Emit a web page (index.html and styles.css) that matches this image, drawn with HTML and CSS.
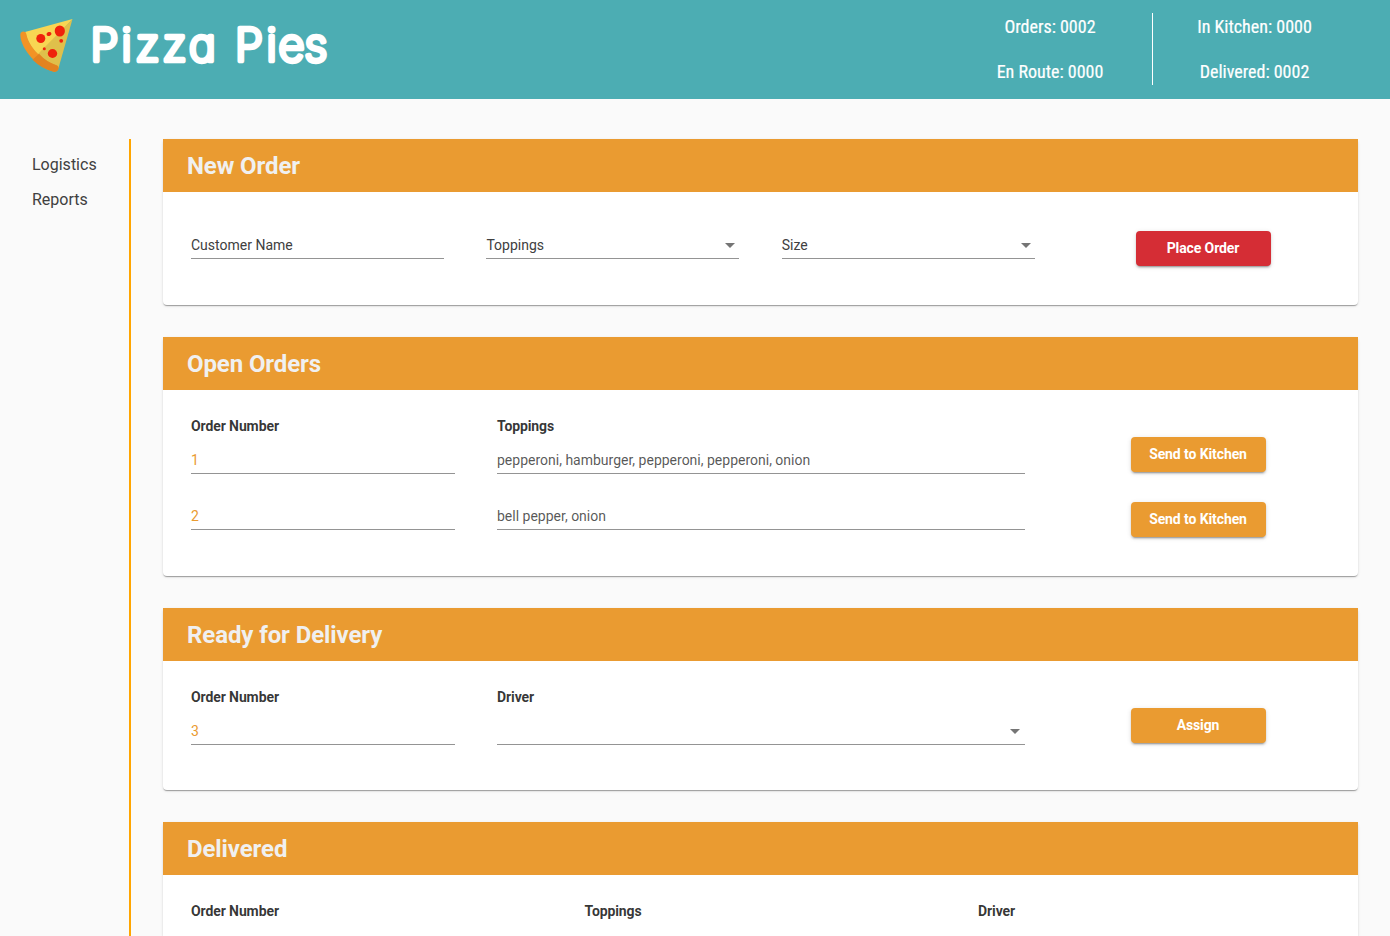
FILE: index.html
```html
<!DOCTYPE html>
<html lang="en">
<head>
<meta charset="utf-8">
<title>Pizza Pies</title>
<link rel="stylesheet" href="styles.css">
</head>
<body>
<header class="topbar">
  <svg class="logo" width="340" height="99" viewBox="0 0 340 99" role="img" aria-label="Pizza Pies">
    <path d="M25 32 72.5 19 39 56Q28 45 25 32Z" fill="#f8d653"/>
    <path d="M72.5 19 58.5 68Q46 63 38 54Z" fill="#dfc04b"/>
    <path d="M20.3 35Q20.2 31.8 23.5 31.5Q26 31.4 26.4 34C28.5 47 43 61.5 56.5 65.2Q59.5 66.5 58 70Q56.5 72.4 53 71.5C38 67.5 21 50 20.3 35Z" fill="#f29325"/>
    <path d="M39 53.8Q46.5 62.3 56.5 65.2Q59.5 66.5 58 70Q56.5 72.4 53 71.5Q41 68.3 32.5 59.8Z" fill="#e28320"/>
    <g fill="#ef220b">
      <circle cx="40.8" cy="38.5" r="4.5"/>
      <ellipse cx="49" cy="34" rx="2.5" ry="2" transform="rotate(-15 49 34)"/>
      <ellipse cx="59.8" cy="31" rx="5.1" ry="5.6"/>
      <circle cx="61.2" cy="40.8" r="1.9"/>
      <circle cx="44.3" cy="48.7" r="1.5"/>
      <ellipse cx="52.5" cy="53.5" rx="4.7" ry="4.4"/>
    </g>
    <text class="wordmark" y="61" x="90.5 121.5 135.5 162.5 189 217 235 266.5 278.5 304.5">Pizza Pies</text>
  </svg>
  <div class="stats">
    <div class="stat-col"><span>Orders: 0002</span><span>En Route: 0000</span></div>
    <div class="stat-col"><span>In Kitchen: 0000</span><span>Delivered: 0002</span></div>
  </div>
</header>
<div class="layout">
  <nav class="sidebar"><a>Logistics</a><a>Reports</a></nav>
  <main class="content">
    <section class="card new-order">
      <h2>New Order</h2>
      <div class="form">
        <div class="field">Customer Name</div>
        <div class="field select">Toppings</div>
        <div class="field select">Size</div>
        <button class="btn red">Place Order</button>
      </div>
    </section>
    <section class="card open-orders">
      <h2>Open Orders</h2>
      <div class="table">
        <div class="col"><strong>Order Number</strong><div class="field num">1</div><div class="field num">2</div></div>
        <div class="col"><strong>Toppings</strong><div class="field value">pepperoni, hamburger, pepperoni, pepperoni, onion</div><div class="field value">bell pepper, onion</div></div>
        <div class="actions"><button class="btn">Send to Kitchen</button><button class="btn">Send to Kitchen</button></div>
      </div>
    </section>
    <section class="card ready">
      <h2>Ready for Delivery</h2>
      <div class="table">
        <div class="col"><strong>Order Number</strong><div class="field num">3</div></div>
        <div class="col"><strong>Driver</strong><div class="field select"></div></div>
        <div class="actions"><button class="btn">Assign</button></div>
      </div>
    </section>
    <section class="card delivered">
      <h2>Delivered</h2>
      <div class="heads"><strong>Order Number</strong><strong>Toppings</strong><strong>Driver</strong></div>
    </section>
  </main>
</div>
</body>
</html>
```
FILE: styles.css
```css
* { box-sizing: border-box; }
body {
  display: flex;
  flex-direction: column;
  margin: 0;
  height: 936px;
  background: #fafafa;
  color: rgba(0, 0, 0, .8);
  font: 14px/20px Roboto, sans-serif;
}
.topbar {
  display: flex;
  flex: none;
  justify-content: space-between;
  height: 99px;
  padding-right: 34px;
  background: #4cadb3;
}
.logo { display: block; }
.wordmark {
  font: 200 45px Inter, sans-serif;
  font-feature-settings: "cv11";
  fill: #fff;
  stroke: #fff;
  stroke-width: 4.6px;
  stroke-linejoin: round;
}
.stats {
  display: flex;
  height: 72px;
  margin-top: 13px;
  color: #fff;
  font: 18px/27px "Roboto Condensed", Roboto, sans-serif;
  -webkit-text-stroke: .2px #fff;
}
.stat-col {
  display: flex;
  flex-direction: column;
  gap: 18px;
  width: 204px;
  text-align: center;
}
.stat-col + .stat-col { border-left: 1px solid #fff; }
.layout {
  display: flex;
  flex: 1;
  min-height: 0;
  padding: 40px 32px 0 0;
}
.sidebar {
  display: flex;
  flex-direction: column;
  gap: 11px;
  width: 131px;
  padding: 14px 0 0 32px;
  border-right: 2px solid orange;
  color: #404040;
  font-size: 16px;
  line-height: 24px;
}
.content {
  display: flex;
  flex: 1;
  flex-direction: column;
  gap: 32px;
  margin-left: 32px;
}
.card {
  flex: none;
  background: #fff;
  border-radius: 4px;
  box-shadow: 0 2px 1px -1px rgba(0,0,0,.2), 0 1px 1px rgba(0,0,0,.14), 0 1px 3px rgba(0,0,0,.12);
}
.new-order { height: 166px; }
.open-orders { height: 239px; }
.ready { height: 182px; }
.delivered {
  height: 114px;
  border-radius: 4px 4px 0 0;
}
h2 {
  height: 53px;
  margin: 0;
  padding: 1px 0 0 24px;
  background: #ea9b31;
  color: #f0f0f0;
  font-size: 24px;
  font-weight: 700;
  letter-spacing: -.1px;
  line-height: 52px;
}
.form {
  display: grid;
  grid-template-columns: 253px 253px 253px 135px;
  column-gap: 42.4px;
  padding: 39px 28px 0;
}
.field {
  height: 28px;
  padding-top: 4px;
  border-bottom: 1px solid #949494;
  color: #404040;
}
.select { display: flex; justify-content: space-between; }
.select::after {
  content: "";
  margin: 8px 4px 0 auto;
  height: 5px;
  border: 5px solid transparent;
  border-top-color: #757575;
  border-bottom: 0;
}
.ready .select::after { margin-right: 5px; }
.btn {
  width: 135px;
  height: 35px;
  padding: 0 1px 1px 0;
  border: 0;
  border-radius: 4px;
  background: #ea9b31;
  box-shadow: 0 3px 1px -2px rgba(0,0,0,.2), 0 2px 2px rgba(0,0,0,.14), 0 1px 5px rgba(0,0,0,.12);
  color: #fff;
  font: 700 14px Roboto, sans-serif;
  letter-spacing: -.1px;
}
.red { margin-left: 58.8px; background: #d52d35; }
.table {
  display: grid;
  grid-template-columns: 264px 528px 135px;
  column-gap: 42px;
  padding: 26px 28px 0;
}
strong { letter-spacing: -.1px; }
.col { display: flex; flex-direction: column; gap: 28px; }
.col strong { height: 20px; margin-bottom: -18px; }
.num { color: #ea9b31; }
.value { color: rgba(0, 0, 0, .67); }
.actions {
  display: flex;
  flex-direction: column;
  gap: 30px;
  padding-top: 21px;
  margin-left: 64px;
}
.heads { display: grid; grid-template-columns: 393.5px 393.5px 1fr; padding: 26px 28px 0; }
```
